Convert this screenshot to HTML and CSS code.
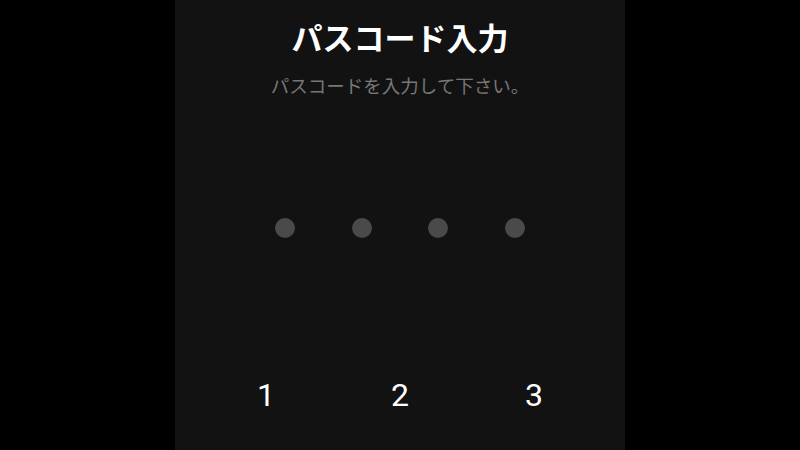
FILE: index.html
```html
<!DOCTYPE html>
<html lang="ja">
<head>
    <meta charset="UTF-8">
    <meta name="viewport" content="width=device-width, initial-scale=1.0">
    <title>パスコード入力</title>
    <link rel="stylesheet" href="styles.css">
</head>
<body>
    <div class="screen">
        <h1 class="title">パスコード入力</h1>
        <p class="subtitle">パスコードを入力して下さい。</p>
        <div class="dots">
            <span class="dot"></span>
            <span class="dot"></span>
            <span class="dot"></span>
            <span class="dot"></span>
        </div>
        <div class="keypad">
            <button class="key">1</button>
            <button class="key">2</button>
            <button class="key">3</button>
        </div>
    </div>
</body>
</html>
```

FILE: styles.css
```css
body {
    margin: 0;
    height: 100vh;
    display: flex;
    justify-content: center;
    background-color: #000;
    font-family: "Noto Sans CJK JP", "Noto Sans", sans-serif;
    overflow: hidden;
}

.screen {
    width: 450px;
    height: 450px;
    background-color: #121212;
    display: flex;
    flex-direction: column;
    align-items: center;
    overflow: hidden;
}

.title {
    margin: 17px 0 0;
    font-size: 31px;
    line-height: 40px;
    font-weight: 700;
    color: #fff;
}

.subtitle {
    margin: 15px 0 0;
    font-size: 18.5px;
    line-height: 26px;
    color: #777;
}

.dots {
    margin-top: 120px;
    display: flex;
    gap: 56.5px;
}

.dot {
    width: 20px;
    height: 20px;
    border-radius: 50%;
    background-color: #4a4a4a;
}

.keypad {
    margin-top: 137px;
    width: 402px;
    display: grid;
    grid-template-columns: repeat(3, 1fr);
}

.key {
    background: none;
    border: none;
    padding: 0;
    color: #fff;
    font-family: Roboto, sans-serif;
    font-size: 32px;
    line-height: 40px;
    cursor: pointer;
}
```
